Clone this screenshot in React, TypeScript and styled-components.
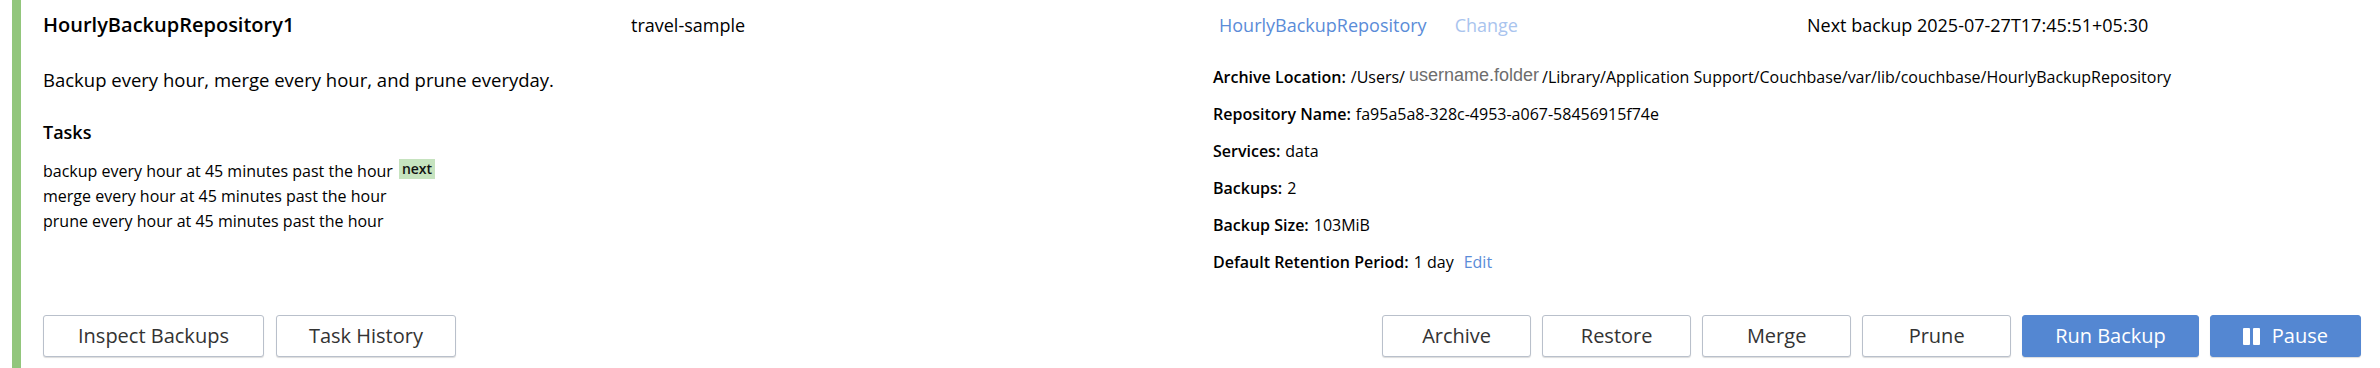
import React from 'react';
import styled, { createGlobalStyle } from 'styled-components';

const GlobalStyle = createGlobalStyle`
  html, body { margin: 0; padding: 0; background: #ffffff; }
  body { font-family: "Open Sans", "Noto Sans", sans-serif; color: #000; }
  * { box-sizing: border-box; }
`;

const Card = styled.section`
  margin-left: 12px;
  height: 368px;
  border-left: 9px solid #92c67c;
  padding: 11px 19px 11px 22px;
  display: flex;
  flex-direction: column;
`;

const HeaderRow = styled.div`
  display: grid;
  grid-template-columns: repeat(4, 1fr);
  column-gap: 34px;
  align-items: baseline;
  font-size: 18px;
  line-height: 28px;
`;

const Title = styled.h2`
  margin: 0;
  font-size: 20px;
  font-weight: 600;
  line-height: 28px;
`;

const Plain = styled.span`
  white-space: nowrap;
`;

const LinkGroup = styled.div`
  display: flex;
  gap: 28px;
  white-space: nowrap;
`;

const Link = styled.a<{ $faded?: boolean }>`
  color: ${(p) => (p.$faded ? '#a9c4ee' : '#5a8cd8')};
  text-decoration: none;
  cursor: pointer;
`;

const Main = styled.div`
  display: grid;
  grid-template-columns: 1fr 1fr;
  column-gap: 22px;
  margin-top: 29px;
`;

const LeftCol = styled.div`
  display: flex;
  flex-direction: column;
`;

const Description = styled.p`
  margin: 0;
  font-size: 18.5px;
  line-height: 24px;
`;

const TasksTitle = styled.h3`
  margin: 28px 0 15px;
  font-size: 18px;
  font-weight: 600;
  line-height: 24px;
`;

const TaskList = styled.ul`
  list-style: none;
  margin: 0;
  padding: 0;
  font-size: 16px;
  line-height: 25px;
`;

const Task = styled.li`
  white-space: nowrap;
`;

const Badge = styled.span`
  display: inline-block;
  vertical-align: top;
  margin-left: 6px;
  padding: 0 3px;
  height: 20px;
  background: #c6e3bf;
  font-size: 14px;
  font-weight: 600;
  line-height: 20px;
  color: #111;
`;

const Details = styled.dl`
  margin: -1px 0 0;
  display: flex;
  flex-direction: column;
  gap: 16px;
  font-size: 16px;
  line-height: 21px;
`;

const DetailRow = styled.div`
  display: flex;
  align-items: baseline;
  white-space: nowrap;
`;

const Label = styled.dt`
  font-weight: 600;
  margin-right: 5px;
`;

const Value = styled.dd`
  margin: 0;
`;

const Redacted = styled.span`
  font-family: "Liberation Sans", Arial, sans-serif;
  font-size: 18px;
  color: #6d6d6d;
  margin: 0 3px 0 4px;
  position: relative;
  top: -2px;
`;

const EditLink = styled.a`
  margin-left: 10px;
  color: #5a8cd8;
  text-decoration: none;
  cursor: pointer;
`;

const Footer = styled.div`
  margin-top: auto;
  display: flex;
  justify-content: space-between;
  align-items: center;
`;

const ButtonGroup = styled.div<{ $gap: number }>`
  display: flex;
  gap: ${(p) => p.$gap}px;
`;

const Button = styled.button<{ $primary?: boolean }>`
  height: 42px;
  min-width: 149px;
  padding: 0 32px;
  display: inline-flex;
  align-items: center;
  justify-content: center;
  gap: 11px;
  font-family: "Open Sans", "Noto Sans", sans-serif;
  font-size: 20px;
  line-height: 1;
  border-radius: 3px;
  border: 1px solid ${(p) => (p.$primary ? '#5487d2' : '#b9c0cb')};
  background: ${(p) => (p.$primary ? '#5487d2' : '#ffffff')};
  color: ${(p) => (p.$primary ? '#ffffff' : '#333333')};
  box-shadow: 0 1px 1px rgba(0, 0, 0, 0.14);
  cursor: pointer;
`;

const WideButton = styled(Button)`
  padding: 0 34px;
`;

const PauseIcon = () => (
  <svg width="18" height="17" viewBox="0 0 18 17" aria-hidden="true">
    <rect x="0" y="0" width="7" height="17" rx="1" fill="#ffffff" />
    <rect x="10" y="0" width="7" height="17" rx="1" fill="#ffffff" />
  </svg>
);

export default function App() {
  return (
    <>
      <GlobalStyle />
      <Card>
        <HeaderRow>
          <Title>HourlyBackupRepository1</Title>
          <Plain>travel-sample</Plain>
          <LinkGroup>
            <Link>HourlyBackupRepository</Link>
            <Link $faded>Change</Link>
          </LinkGroup>
          <Plain>Next backup 2025-07-27T17:45:51+05:30</Plain>
        </HeaderRow>
        <Main>
          <LeftCol>
            <Description>Backup every hour, merge every hour, and prune everyday.</Description>
            <TasksTitle>Tasks</TasksTitle>
            <TaskList>
              <Task>
                backup every hour at 45 minutes past the hour<Badge>next</Badge>
              </Task>
              <Task>merge every hour at 45 minutes past the hour</Task>
              <Task>prune every hour at 45 minutes past the hour</Task>
            </TaskList>
          </LeftCol>
          <Details>
            <DetailRow>
              <Label>Archive Location:</Label>
              <Value>
                /Users/<Redacted>username.folder</Redacted>/Library/Application Support/Couchbase/var/lib/couchbase/HourlyBackupRepository
              </Value>
            </DetailRow>
            <DetailRow>
              <Label>Repository Name:</Label>
              <Value>fa95a5a8-328c-4953-a067-58456915f74e</Value>
            </DetailRow>
            <DetailRow>
              <Label>Services:</Label>
              <Value>data</Value>
            </DetailRow>
            <DetailRow>
              <Label>Backups:</Label>
              <Value>2</Value>
            </DetailRow>
            <DetailRow>
              <Label>Backup Size:</Label>
              <Value>103MiB</Value>
            </DetailRow>
            <DetailRow>
              <Label>Default Retention Period:</Label>
              <Value>
                1 day<EditLink>Edit</EditLink>
              </Value>
            </DetailRow>
          </Details>
        </Main>
        <Footer>
          <ButtonGroup $gap={12}>
            <WideButton>Inspect Backups</WideButton>
            <Button>Task History</Button>
          </ButtonGroup>
          <ButtonGroup $gap={11}>
            <Button>Archive</Button>
            <Button>Restore</Button>
            <Button>Merge</Button>
            <Button>Prune</Button>
            <Button $primary>Run Backup</Button>
            <Button $primary>
              <PauseIcon />
              Pause
            </Button>
          </ButtonGroup>
        </Footer>
      </Card>
    </>
  );
}
